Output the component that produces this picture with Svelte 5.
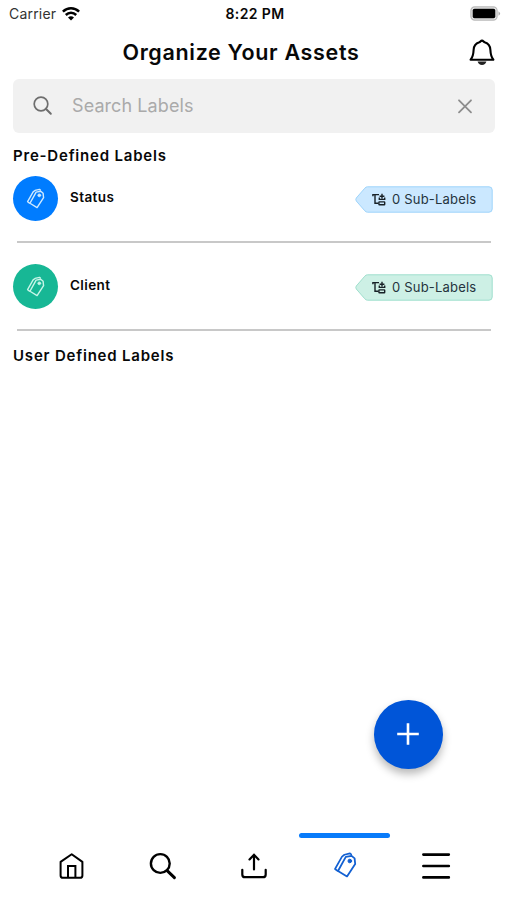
<script lang="ts">
  type Label = { name: string; count: number; tone: string };

  const predefined: Label[] = [
    { name: "Status", count: 0, tone: "blue" },
    { name: "Client", count: 0, tone: "green" },
  ];
  const tabs = ["home", "search", "upload", "labels", "menu"];

  let active = $state("labels");
  let query = $state("");
</script>

{#snippet tags()}
  <svg class="tags" viewBox="0 0 24 26" fill="none" stroke="currentColor" stroke-linejoin="round" stroke-linecap="round">
    <path d="M5 19 14 24.4 22.2 12 21.6 6.4 18.6 3.9 12.8 4.9Z" stroke-width="1.8" />
    <path d="M4.4 18.8 2 17 9 4.6 11.4 2.8 17 1.4 18.2 2.4" stroke-width="1.7" />
    <circle cx="16.8" cy="9" r="1.8" fill="currentColor" stroke-width="1" />
  </svg>
{/snippet}

<div class="screen">
  <div class="status">
    <div class="carrier">
      <span>Carrier</span>
      <svg width="18" height="14" viewBox="0 0 18 14" fill="none" stroke="#000" stroke-width="2.5">
        <path d="M.9 4.7C5.6.2 12.4.2 17.1 4.7" />
        <path d="M3.8 8C6.8 5.1 11.2 5.1 14.2 8" />
        <path d="M9 13.5 6 10.5Q9 8 12 10.5Z" fill="#000" stroke="none" />
      </svg>
    </div>
    <span class="time">8:22 PM</span>
    <svg class="battery" width="31" height="15" viewBox="0 0 31 15">
      <rect x=".9" y=".9" width="26.2" height="13.2" rx="3.8" fill="#e5e5e5" stroke="#b9b9b9" stroke-width="1.2" />
      <rect x="2.7" y="2.8" width="22.6" height="9.4" rx="1.8" />
      <path d="M28.5 5.2Q31.6 7.5 28.5 9.8Z" fill="#aaa" />
    </svg>
  </div>

  <header class="header">
    <h1>Organize Your Assets</h1>
    <button class="bell" aria-label="Notifications">
      <svg width="26" height="28" viewBox="0 0 26 28" fill="none" stroke="#000" stroke-width="2.1" stroke-linejoin="round">
        <path d="M13 2.6C14.3 2.6 14.6 3.8 15.7 4.2 19.3 5.3 21.3 8.2 21.4 12 21.6 16.8 22.2 19.2 24.4 21.7H1.6C3.8 19.2 4.4 16.8 4.6 12 4.7 8.2 6.7 5.3 10.3 4.2 11.4 3.8 11.7 2.6 13 2.6Z" />
        <path d="M8.6 23.6H17.4Q16.4 27 13 27T8.6 23.6Z" fill="#222" stroke="none" />
      </svg>
    </button>
  </header>

  <div class="search">
    <svg width="20" height="20" viewBox="0 0 20 20" fill="none" stroke="#6e6e6e" stroke-width="1.7">
      <circle cx="8" cy="8" r="6.8" />
      <path d="m12.8 12.8 5 5" stroke-width="2" stroke-linecap="round" />
    </svg>
    <input placeholder="Search Labels" bind:value={query} />
    <button aria-label="Clear" onclick={() => (query = "")}>
      <svg width="16" height="16" viewBox="0 0 16 16" fill="none" stroke="#8d8d8d" stroke-width="1.8" stroke-linecap="round">
        <path d="m2 2.3 12 12M14 2.3 2 14.3" />
      </svg>
    </button>
  </div>

  <main>
    <h2>Pre-Defined Labels</h2>
    {#each predefined as label}
      <div class="row {label.tone}">
        <div class="avatar">{@render tags()}</div>
        <span class="name">{label.name}</span>
        <div class="badge">
          <svg class="badge-shape" viewBox="0 0 139 27" fill="currentColor">
            <path d="M13.5.8H135Q138.2.8 138.2 4V23Q138.2 26.2 135 26.2H13.5Q12 26.2 10.8 24.8L2.3 15Q1.3 13.5 2.3 12L10.8 2.2Q12 .8 13.5.8Z" />
          </svg>
          <svg class="tree" width="14" height="13" viewBox="0 0 14 13" fill="none" stroke="#182127" stroke-width="1.4">
            <path d="M.4 1.6H7M.9.9V3.2M3 1.6V10.3H6.4" />
            <rect x="6.9" y="8.9" width="5.8" height="2.8" rx=".5" />
            <path d="M10 .8V5.6M7.6 3.2H12.4M7.3 4.4V6.4H12.7V4.4" />
          </svg>
          <span>{label.count} Sub-Labels</span>
        </div>
      </div>
    {/each}
    <h2 class="user">User Defined Labels</h2>
  </main>

  <button class="fab" aria-label="Add label">
    <svg width="24" height="24" viewBox="0 0 24 24" stroke="#fff" stroke-width="2.6">
      <path d="M12 1.2V22.8M1.2 12H22.8" />
    </svg>
  </button>

  <nav>
    {#each tabs as tab}
      <button class="tab" class:active={active === tab} aria-label={tab} onclick={() => (active = tab)}>
        {#if tab === "home"}
          <svg width="26" height="28" viewBox="0 0 26 28" fill="none" stroke="#000" stroke-width="2" stroke-linejoin="round">
            <path d="M12.7 2.2 23.4 9.9V23.4Q23.4 25.8 21 25.8H4Q1.6 25.8 1.6 23.4V9.9Z" />
            <path d="M9 25.8V14H16.4V25.8" stroke-linejoin="miter" />
          </svg>
        {:else if tab === "search"}
          <svg width="28" height="28" viewBox="0 0 28 28" fill="none" stroke="#000" stroke-width="2.4">
            <circle cx="11.3" cy="11.5" r="9.4" />
            <path d="m18.4 18.8 7 6.8" stroke-width="3" stroke-linecap="round" />
          </svg>
        {:else if tab === "upload"}
          <svg width="28" height="28" viewBox="0 0 28 28" fill="none" stroke="#000" stroke-width="2.2" stroke-linecap="round">
            <path d="M14 17.4V3M9.5 7.4 14 2.8 18.5 7.4" />
            <path d="M2.3 17.8V22.4Q2.3 25.2 5.1 25.2H22.9Q25.7 25.2 25.7 22.4V17.8" />
          </svg>
        {:else if tab === "labels"}
          {@render tags()}
        {:else}
          <svg width="30" height="28" viewBox="0 0 30 28" stroke="#000" stroke-width="2.7" stroke-linecap="round">
            <path d="M2.4 2.6H27.8M2.4 14H27.8M2.4 25.4H27.8" />
          </svg>
        {/if}
      </button>
    {/each}
  </nav>
</div>

<style>
  :global(body) {
    margin: 0;
    background: #fff;
  }

  .screen {
    display: flex;
    flex-direction: column;
    box-sizing: border-box;
    width: 100%;
    height: 100vh;
    font-family: Inter, "Liberation Sans", sans-serif;
    color: #080808;
    position: relative;
    overflow: hidden;
  }

  button {
    border: none;
    padding: 0;
    background: none;
    color: inherit;
    display: flex;
    cursor: pointer;
  }

  svg {
    display: block;
    flex: none;
  }

  /* Status bar */
  .status {
    display: grid;
    grid-template-columns: 1fr auto 1fr;
    align-items: center;
    height: 27px;
    padding: 0 6px 0 9px;
    font-size: 14px;
  }
  .carrier {
    display: flex;
    align-items: center;
    gap: 6px;
    color: #333;
    letter-spacing: 0.2px;
  }
  .time {
    font-weight: 600;
    font-size: 14px;
    letter-spacing: 0.4px;
  }
  .battery {
    justify-self: end;
  }

  /* Header */
  .header {
    display: flex;
    align-items: center;
    height: 49px;
    padding: 0 12px 0 13px;
  }
  h1 {
    flex: 1;
    margin: 0;
    text-align: center;
    font-size: 21.5px;
    font-weight: 600;
    letter-spacing: 0.68px;
  }

  /* Search */
  .search {
    display: flex;
    align-items: center;
    height: 54px;
    margin: 3px 12px 0 13px;
    padding: 0 22px 0 20px;
    box-sizing: border-box;
    border-radius: 6px;
    background: #f1f1f1;
  }
  .search input {
    flex: 1;
    min-width: 0;
    margin-left: 19px;
    padding: 0 0 2px;
    border: none;
    outline: none;
    background: none;
    font: 400 18px Inter, sans-serif;
    letter-spacing: 0.08px;
  }
  .search input::placeholder {
    color: #aaa;
    opacity: 1;
  }

  /* Labels */
  main {
    flex: 1;
    padding: 0 13px;
  }
  h2 {
    margin: 13px 0 10px;
    font-size: 15px;
    line-height: 20px;
    font-weight: 600;
    letter-spacing: 0.8px;
  }
  h2.user {
    margin-top: 15px;
  }
  .row {
    display: flex;
    align-items: flex-start;
    height: 65px;
    position: relative;
  }
  .row::after {
    content: "";
    position: absolute;
    left: 4px;
    right: 3px;
    bottom: -2px;
    height: 2px;
    background: #c8c8c8;
  }
  .row + .row {
    margin-top: 23px;
  }
  .row + h2 {
    margin-top: 17px;
  }
  .avatar {
    display: flex;
    align-items: center;
    justify-content: center;
    width: 45px;
    height: 45px;
    border-radius: 50%;
    background: #007cff;
    color: #cfeaff;
  }
  .green .avatar {
    background: #17b795;
    color: #c8f5e8;
  }
  .avatar .tags {
    width: 19px;
    height: 21px;
  }
  .name {
    margin: 12px 0 0 12px;
    font-size: 13.5px;
    line-height: 18px;
    font-weight: 600;
    letter-spacing: 0.4px;
  }
  .badge {
    display: flex;
    align-items: center;
    gap: 6px;
    width: 139px;
    height: 27px;
    box-sizing: border-box;
    margin: 10px 1px 0 auto;
    padding-left: 18px;
    position: relative;
    font-size: 13px;
    letter-spacing: 0.2px;
    color: #25343d;
  }
  .badge-shape {
    position: absolute;
    inset: 0;
    color: #cbe8ff;
    stroke: #9ed4fb;
  }
  .green .badge-shape {
    color: #cdf0e5;
    stroke: #9fdfcd;
  }
  .badge .tree,
  .badge span {
    position: relative;
  }
  .badge span {
    padding-bottom: 2px;
  }

  /* Floating action button */
  .fab {
    position: absolute;
    left: 374px;
    top: 700px;
    width: 68.5px;
    height: 68.5px;
    align-items: center;
    justify-content: center;
    border-radius: 50%;
    background: #0055d8;
    box-shadow: 0 5px 8px rgba(0, 0, 0, 0.28);
  }

  /* Tab bar */
  nav {
    display: flex;
    height: 67px;
    padding: 0 26px;
  }
  .tab {
    flex: 1;
    flex-direction: column;
    align-items: center;
    padding-top: 14px;
    border-top: 5px solid transparent;
    position: relative;
  }
  .tab.active {
    color: #1260d2;
  }
  .tab.active::before {
    content: "";
    position: absolute;
    top: -5px;
    left: 0;
    right: 0;
    height: 5px;
    border-radius: 3px;
    background: #087bfa;
  }
  .tab .tags {
    width: 24px;
    height: 26px;
  }
</style>
